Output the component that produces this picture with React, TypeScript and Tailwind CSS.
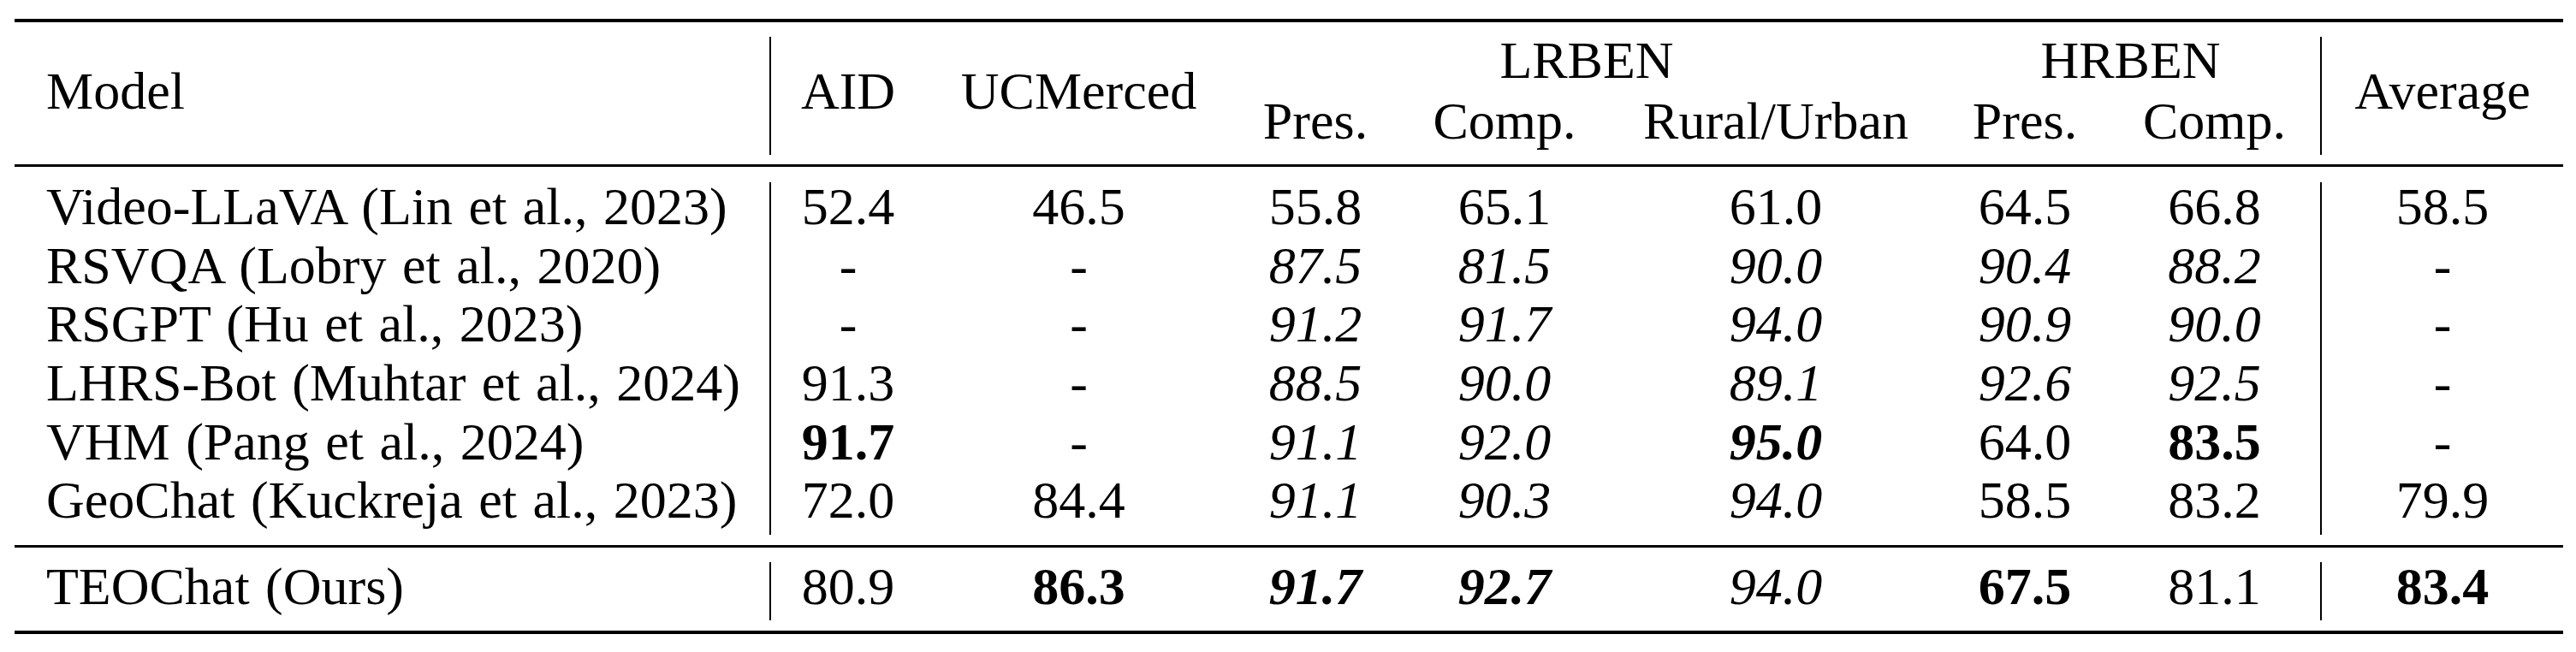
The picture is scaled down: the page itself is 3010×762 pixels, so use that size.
import React from "react";

const COLS =
  "grid grid-cols-[882px_182px_359px_194px_248px_386px_196px_247px_284px]";

type Cell = { v: string; i?: boolean; b?: boolean };

const N = (v: string): Cell => ({ v });
const I = (v: string): Cell => ({ v, i: true });
const B = (v: string): Cell => ({ v, b: true });
const BI = (v: string): Cell => ({ v, i: true, b: true });

const rows: { name: string; cells: Cell[] }[] = [
  {
    name: "Video-LLaVA (Lin et al., 2023)",
    cells: [N("52.4"), N("46.5"), N("55.8"), N("65.1"), N("61.0"), N("64.5"), N("66.8"), N("58.5")],
  },
  {
    name: "RSVQA (Lobry et al., 2020)",
    cells: [N("-"), N("-"), I("87.5"), I("81.5"), I("90.0"), I("90.4"), I("88.2"), N("-")],
  },
  {
    name: "RSGPT (Hu et al., 2023)",
    cells: [N("-"), N("-"), I("91.2"), I("91.7"), I("94.0"), I("90.9"), I("90.0"), N("-")],
  },
  {
    name: "LHRS-Bot (Muhtar et al., 2024)",
    cells: [N("91.3"), N("-"), I("88.5"), I("90.0"), I("89.1"), I("92.6"), I("92.5"), N("-")],
  },
  {
    name: "VHM (Pang et al., 2024)",
    cells: [B("91.7"), N("-"), I("91.1"), I("92.0"), BI("95.0"), N("64.0"), B("83.5"), N("-")],
  },
  {
    name: "GeoChat (Kuckreja et al., 2023)",
    cells: [N("72.0"), N("84.4"), I("91.1"), I("90.3"), I("94.0"), N("58.5"), N("83.2"), N("79.9")],
  },
];

const ours = {
  name: "TEOChat (Ours)",
  cells: [N("80.9"), B("86.3"), BI("91.7"), BI("92.7"), I("94.0"), B("67.5"), N("81.1"), B("83.4")],
};

function cellClass(c: Cell, idx: number) {
  const parts = ["text-center", "leading-[56px]", "whitespace-nowrap"];
  if (c.i) parts.push("italic");
  if (c.b) parts.push("font-bold");
  if (idx === 0 || idx === 7) parts.push("border-l-2", "border-black");
  return parts.join(" ");
}

function Row({ name, cells, h }: { name: string; cells: Cell[]; h: string }) {
  return (
    <div className={`${COLS} ${h}`}>
      <div className="pl-[37px] leading-[56px] whitespace-nowrap [word-spacing:3px]">{name}</div>
      {cells.map((c, idx) => (
        <div key={idx} className={cellClass(c, idx)}>
          {c.v}
        </div>
      ))}
    </div>
  );
}

export default function App() {
  return (
    <div className="w-[3010px] h-[762px] bg-white text-black font-['Liberation_Serif','Times_New_Roman',serif] text-[62px] overflow-hidden">
      <div className="ml-[17px] w-[2978px] pt-[22px]">
        {/* top rule */}
        <div className="h-[4px] bg-black" />
        <div className="h-[17px]" />
        {/* header */}
        <div className={`${COLS} grid-rows-[69px_69px] h-[138px]`}>
          <div className="row-span-2 pl-[37px] pt-[35px] leading-[56px]">Model</div>
          <div className="row-span-2 border-l-2 border-black text-center pt-[35px] leading-[56px]">AID</div>
          <div className="row-span-2 text-center pt-[35px] leading-[56px]">UCMerced</div>
          <div className="col-span-3 text-center leading-[54px]">LRBEN</div>
          <div className="col-span-2 text-center leading-[54px]">HRBEN</div>
          <div className="row-span-2 border-l-2 border-black text-center pt-[35px] leading-[56px]">Average</div>
          <div className="text-center leading-[58px]">Pres.</div>
          <div className="text-center leading-[58px]">Comp.</div>
          <div className="text-center leading-[58px]">Rural/Urban</div>
          <div className="text-center leading-[58px]">Pres.</div>
          <div className="text-center leading-[58px]">Comp.</div>
        </div>
        <div className="h-[11px]" />
        {/* mid rule */}
        <div className="h-[3px] bg-black" />
        <div className="h-[18px]" />
        {/* body */}
        <div className="flex flex-col">
          {rows.map((r) => (
            <Row key={r.name} name={r.name} cells={r.cells} h="h-[68.7px]" />
          ))}
        </div>
        <div className="h-[12px]" />
        <div className="h-[3px] bg-black" />
        <div className="h-[17px]" />
        <Row name={ours.name} cells={ours.cells} h="h-[68px]" />
        <div className="h-[12px]" />
        {/* bottom rule */}
        <div className="h-[4px] bg-black" />
      </div>
    </div>
  );
}
